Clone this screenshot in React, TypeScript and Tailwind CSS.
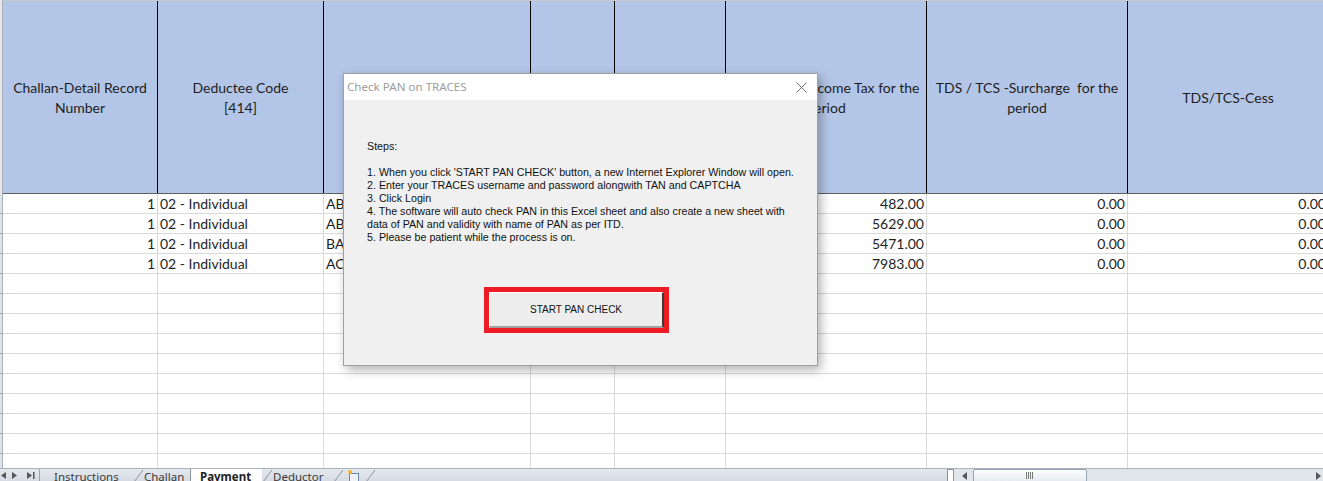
import React from "react";

const COLS = "grid grid-cols-[155px_166px_207px_84px_111px_201px_201px_201px]";

const headers: string[][] = [
  ["Challan-Detail Record", "Number"],
  ["Deductee Code", "[414]"],
  ["PAN of the Deductee", "[415]"],
  ["Name of", "Deductee", "[416]"],
  ["Date of", "Payment", "[418]"],
  ["TDS / TCS -Income Tax for the", "period"],
  ["TDS / TCS -Surcharge\u00a0 for the", "period"],
  ["TDS/TCS-Cess"],
];

const data: string[][] = [
  ["1", "02 - Individual", "ABCPT4521K", "RAJESH", "01-04-2019", "482.00", "0.00", "0.00"],
  ["1", "02 - Individual", "ABFPS7812L", "SURESH", "01-04-2019", "5629.00", "0.00", "0.00"],
  ["1", "02 - Individual", "BAKPM3390Q", "MAHESH", "01-04-2019", "5471.00", "0.00", "0.00"],
  ["1", "02 - Individual", "ACDPV6621H", "VIJAY", "01-04-2019", "7983.00", "0.00", "0.00"],
];

const align = ["text-right", "text-left", "text-left", "text-left", "text-left", "text-right", "text-right", "text-right"];

function Slant() {
  return (
    <svg width="11" height="13" viewBox="0 0 11 13" className="shrink-0">
      <line x1="1" y1="13" x2="10" y2="1" stroke="#8a93a3" strokeWidth="1" />
    </svg>
  );
}

export default function App() {
  const emptyRows = 10;
  return (
    <div className="relative w-[1323px] h-[481px] overflow-hidden bg-white font-['Lato',sans-serif] text-[#1e1e1e]">
      <div className="flex h-[468px] overflow-hidden">
        {/* row header strip */}
        <div className="w-[3px] shrink-0 flex flex-col bg-[#dfe3ea] border-r border-[#a9b1bf]">
          <div className="h-[194px] shrink-0 bg-[#e6e6e6]" />
          {Array.from({ length: data.length + emptyRows }).map((_, i) => (
            <div key={i} className="h-[20px] shrink-0 border-b border-[#9aa3b2]" />
          ))}
        </div>
        <div className="flex-1 flex flex-col overflow-hidden">
          {/* header */}
          <div className={`${COLS} h-[194px] shrink-0 border-t border-t-[#c8c8c8] border-b border-b-[#5f5f5f] bg-[#b4c6e7]`}>
            {headers.map((h, i) => (
              <div key={i} className="border-r border-black flex flex-col items-center justify-center pt-[2px] text-center text-[14px] leading-[20px] whitespace-nowrap overflow-hidden">
                {h.map((l, j) => (
                  <span key={j}>{l}</span>
                ))}
              </div>
            ))}
          </div>
          {/* data */}
          {data.map((r, i) => (
            <div key={i} className={`${COLS} h-[20px] shrink-0 border-b border-[#d9d9d9]`}>
              {r.map((c, j) => (
                <div key={j} className={`${align[j]} border-r border-[#d9d9d9] px-[2px] text-[14px] leading-[20px] whitespace-nowrap overflow-hidden`}>
                  {c}
                </div>
              ))}
            </div>
          ))}
          {Array.from({ length: emptyRows }).map((_, i) => (
            <div key={i} className={`${COLS} h-[20px] shrink-0 border-b border-[#d9d9d9]`}>
              {Array.from({ length: 8 }).map((__, j) => (
                <div key={j} className="border-r border-[#d9d9d9]" />
              ))}
            </div>
          ))}
        </div>
      </div>

      {/* sheet tab bar */}
      <div className="flex h-[13px] items-start bg-gradient-to-b from-[#e4e8ee] to-[#d6dbe3] border-t border-[#aab2bf] font-['Noto_Sans',sans-serif] text-[11.5px] leading-[15px] text-[#3c3c3c] overflow-hidden">
        <div className="w-[40px] shrink-0 h-full flex items-center gap-[6px] pl-[1px] border-r border-[#9aa3b2]">
          <svg width="5" height="7" viewBox="0 0 5 7"><polygon points="5,0 0,3.5 5,7" fill="#555" /></svg>
          <svg width="5" height="7" viewBox="0 0 5 7"><polygon points="0,0 5,3.5 0,7" fill="#555" /></svg>
          <svg width="8" height="7" viewBox="0 0 8 7" className="ml-[4px]"><polygon points="0,0 5,3.5 0,7" fill="#555" /><rect x="6" y="0" width="1.5" height="7" fill="#555" /></svg>
        </div>
        <div className="w-[14px] shrink-0" />
        <div className="w-[79px] shrink-0">Instructions</div>
        <Slant />
        <div className="w-[46px] shrink-0">Challan</div>
        <div className="w-[72px] shrink-0 h-full bg-white border-l border-[#8a93a3] pl-[9px] font-bold text-[#222]">Payment</div>
        <Slant />
        <div className="w-[60px] shrink-0">Deductor</div>
        <Slant />
        <div className="w-[21px] shrink-0 flex">
          <svg width="16" height="13" viewBox="0 0 16 13" className="ml-[1px]">
            <rect x="4.5" y="4.5" width="9" height="8" fill="#eef2f7" stroke="#6d87a8" />
            <circle cx="5" cy="3" r="2" fill="#f2b431" />
          </svg>
        </div>
        <Slant />
        <div className="flex-1" />
        {/* horizontal scrollbar */}
        <div className="w-[376px] shrink-0 h-full flex items-start bg-[#e1e6ed]">
          <div className="w-[7px] h-[13px] bg-white border border-[#8a93a3]" />
          <svg width="14" height="13" viewBox="0 0 14 13" className="ml-[5px]"><polygon points="8,3 3,7 8,11" fill="#555" /></svg>
          <div className="w-[114px] h-[13px] rounded-t-[2px] border border-[#9aa3b2] bg-gradient-to-b from-[#fbfcfd] to-[#e8ecf1] flex items-center justify-center">
            <svg width="8" height="7" viewBox="0 0 8 7"><line x1="0.5" y1="0" x2="0.5" y2="7" stroke="#777" /><line x1="2.5" y1="0" x2="2.5" y2="7" stroke="#777" /><line x1="4.5" y1="0" x2="4.5" y2="7" stroke="#777" /><line x1="6.5" y1="0" x2="6.5" y2="7" stroke="#777" /></svg>
          </div>
          <div className="flex-1" />
          <svg width="12" height="13" viewBox="0 0 12 13"><polygon points="5,3 10,7 5,11" fill="#555" /></svg>
        </div>
      </div>

      {/* dialog */}
      <div className="absolute left-[343px] top-[73px] w-[475px] h-[293px] bg-[#f0f0f0] border border-[#a0a0a0] shadow-[3px_4px_10px_rgba(0,0,0,0.3)] flex flex-col">
        <div className="h-[26px] shrink-0 bg-white flex items-center justify-between pl-[3px] pr-[10px] font-['Noto_Sans',sans-serif] text-[11.6px] text-[#9c9c9c]">
          <span>Check PAN on TRACES</span>
          <svg width="11" height="11" viewBox="0 0 11 11">
            <line x1="0.5" y1="0.5" x2="10.5" y2="10.5" stroke="#6f6f6f" strokeWidth="1" />
            <line x1="10.5" y1="0.5" x2="0.5" y2="10.5" stroke="#6f6f6f" strokeWidth="1" />
          </svg>
        </div>
        <div className="pl-[23px] pt-[40px] font-['Liberation_Sans',sans-serif] text-[10.7px] leading-[13px] text-[#111] whitespace-nowrap">
          <div>Steps:</div>
          <div>&nbsp;</div>
          <div>1. When you click 'START PAN CHECK' button, a new Internet Explorer Window will open.</div>
          <div>2. Enter your TRACES username and password alongwith TAN and CAPTCHA</div>
          <div>3. Click Login</div>
          <div>4. The software will auto check PAN in this Excel sheet and also create a new sheet with</div>
          <div>data of PAN and validity with name of PAN as per ITD.</div>
          <div>5. Please be patient while the process is on.</div>
        </div>
        <div className="pl-[140px] pt-[43px]">
          <div className="w-[185px] h-[46px] border-[5px] border-[#ed1c24]">
            <div className="w-full h-full bg-[#ededed] border-t border-l border-white border-r-2 border-r-[#3a3a3a] border-b-2 border-b-[#a0a0a0] flex items-center justify-center font-['Liberation_Sans',sans-serif] text-[10px] text-[#111]">
              START PAN CHECK
            </div>
          </div>
        </div>
      </div>
    </div>
  );
}
